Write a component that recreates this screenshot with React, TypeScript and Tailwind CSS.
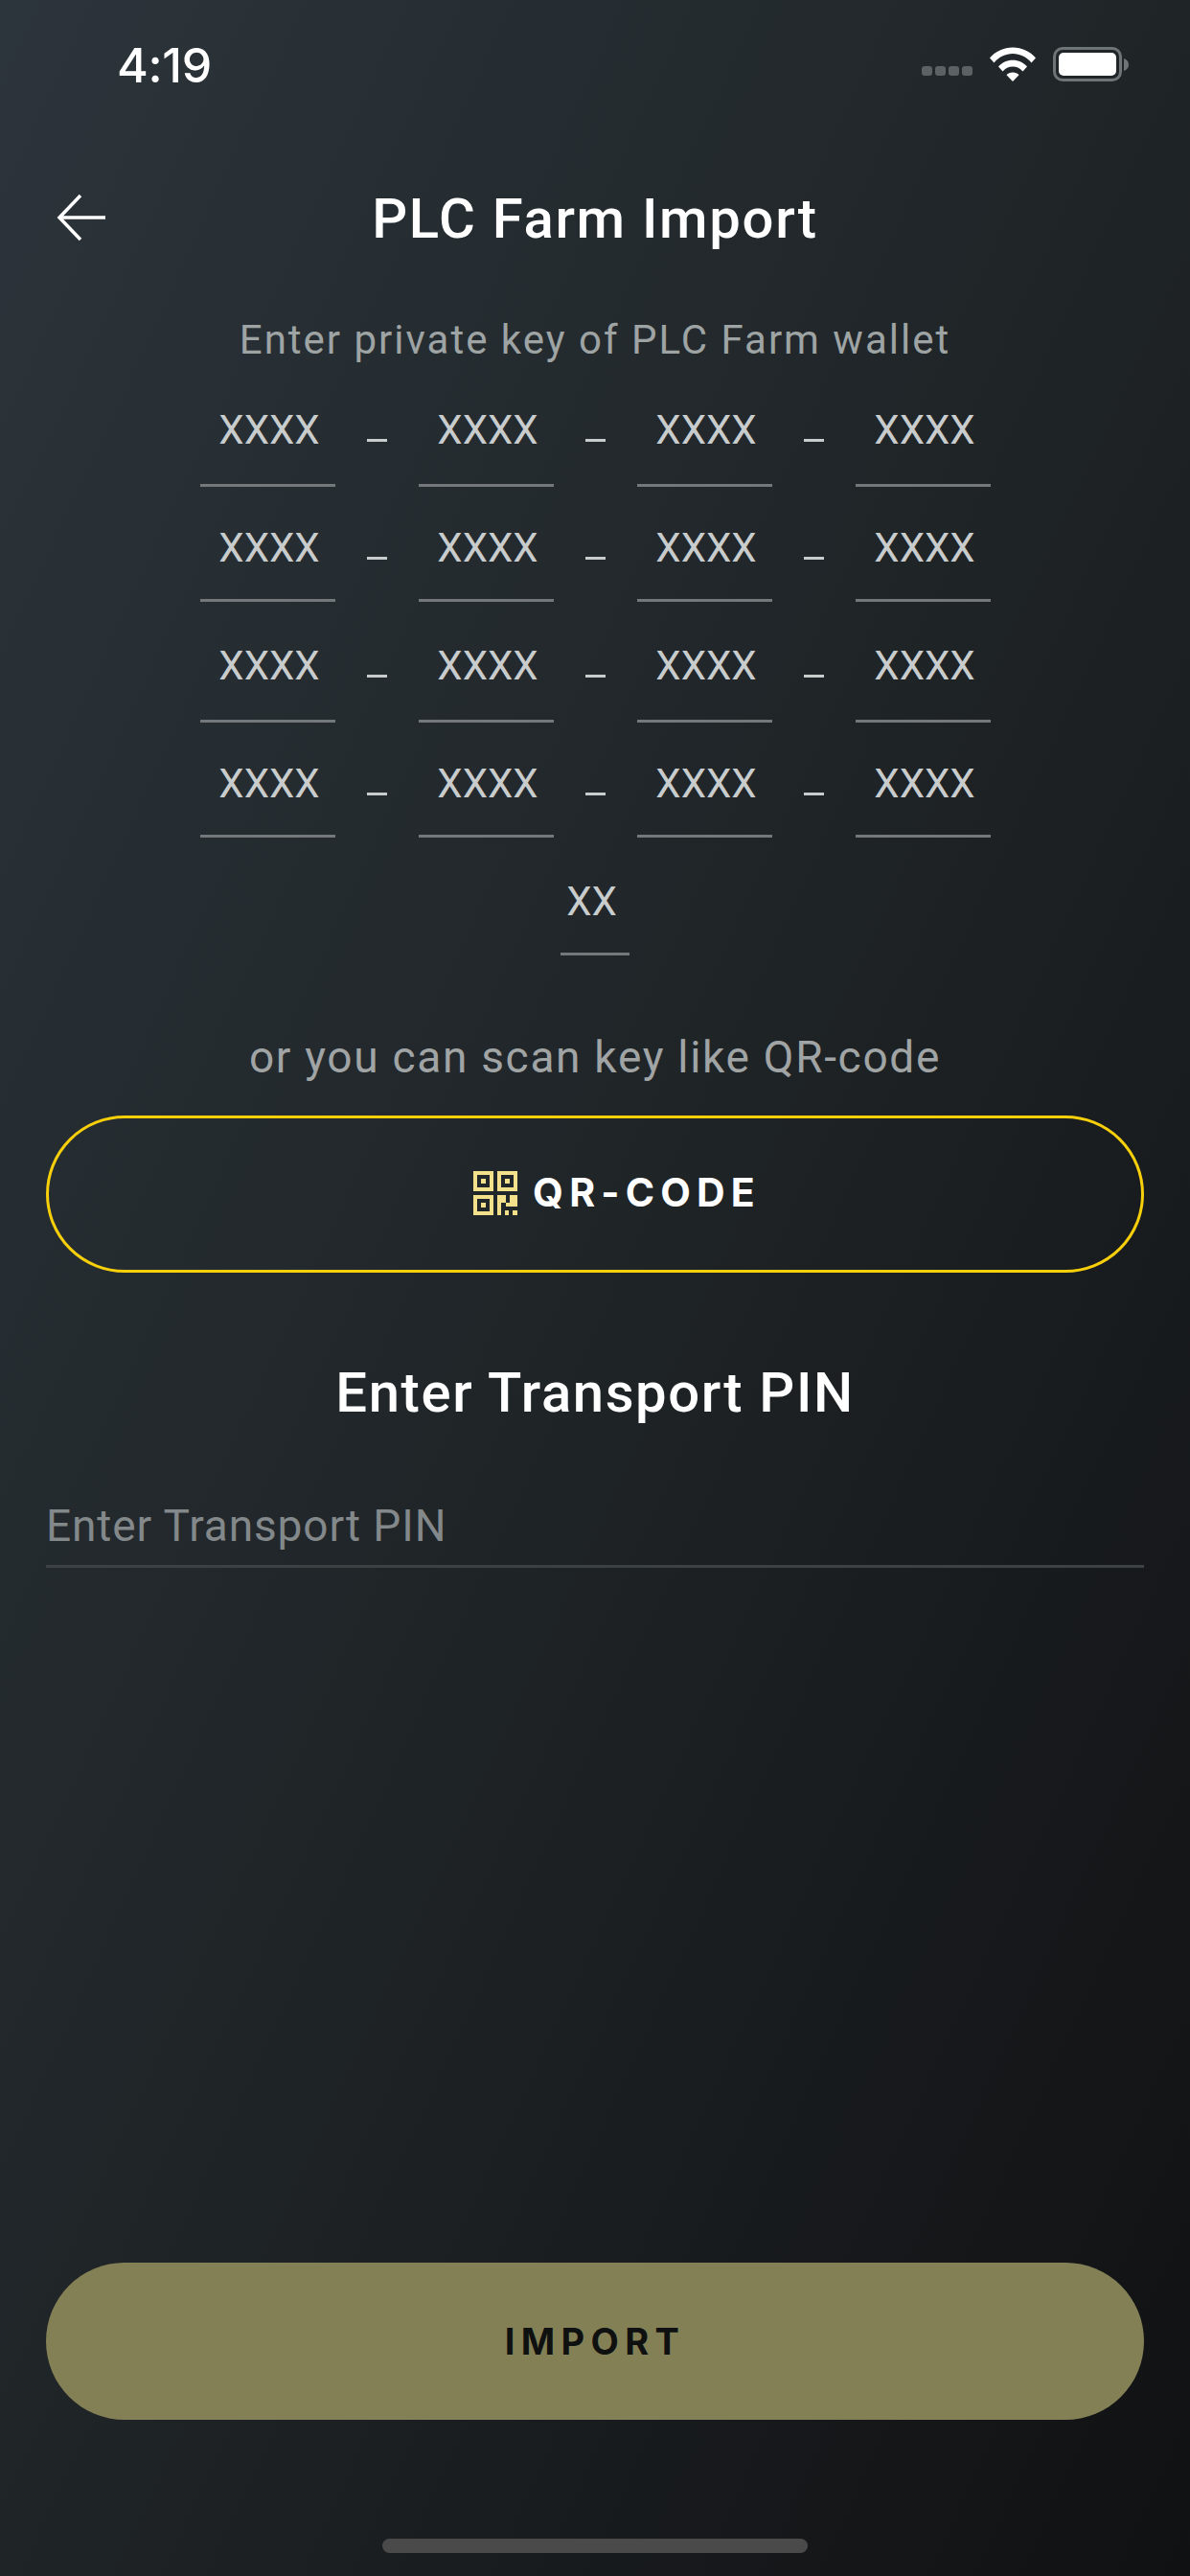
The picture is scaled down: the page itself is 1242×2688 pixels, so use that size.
const FONT = "font-['Roboto',sans-serif]"

const ROWS = [0, 1, 2, 3]
const CELLS = [0, 1, 2, 3]

function KeyCell({ label, width, nudge, short }: { label: string; width: string; nudge: string; short: boolean }) {
  return (
    <div className={`${width} h-[93px] flex flex-col shrink-0`}>
      <div className={`${short ? 'h-[86px] pb-[20px]' : 'h-[89px] pb-[23px]'} flex items-center justify-center text-[42px] leading-none text-[#c9cccc] ${nudge}`}>
        {label}
      </div>
      <div className="h-[3px] bg-[#74787a]" />
    </div>
  )
}

function KeyRow({ short }: { short: boolean }) {
  return (
    <div className="flex justify-center">
      {CELLS.map(i => (
        <div key={i} className="flex">
          <KeyCell label="XXXX" width="w-[141px]" nudge="pl-[4px]" short={short} />
          {i < 3 && (
            <div className="w-[87px] flex justify-center">
              <div className="w-[21px] h-[3px] mt-[42px] ml-[1px] bg-[#c9cccc]" />
            </div>
          )}
        </div>
      ))}
    </div>
  )
}

function WifiIcon() {
  return (
    <svg width="48" height="36" viewBox="0 0 48 36" fill="#fff">
      <path d="M0 11.5 C6 4.5 14.5 0.5 24 0.5 C33.5 0.5 42 4.5 48 11.5 L43.5 16.5 C38.5 10.5 31.5 7 24 7 C16.5 7 9.5 10.5 4.5 16.5 Z" />
      <path d="M9 20.5 C12.7 16.2 18 13.7 24 13.7 C30 13.7 35.3 16.2 39 20.5 L34.5 25.5 C32 22.3 28.2 20.4 24 20.4 C19.8 20.4 16 22.3 13.5 25.5 Z" />
      <path d="M17.5 29.2 C19 27.5 21.3 26.6 24 26.6 C26.7 26.6 29 27.5 30.5 29.2 L24 36 Z" />
    </svg>
  )
}

function BatteryIcon() {
  return (
    <div className="flex items-center">
      <div className="w-[72px] h-[36px] rounded-[10px] border-[3px] border-[#6f7476] p-[3px]">
        <div className="w-full h-full rounded-[5px] bg-white" />
      </div>
      <svg width="5" height="13" viewBox="0 0 5 13" className="ml-[2px]">
        <path d="M0 0 C3 1 5 3.5 5 6.5 C5 9.5 3 12 0 13 Z" fill="#6f7476" />
      </svg>
    </div>
  )
}

function QrIcon() {
  return (
    <svg width="46" height="46" viewBox="0 0 46 46" fill="#f3e08a">
      <path fillRule="evenodd" d="M0 0H21V21H0ZM4 4V17H17V4ZM8 8H13V13H8Z" />
      <path fillRule="evenodd" d="M25 0H46V21H25ZM29 4V17H42V4ZM33 8H38V13H33Z" />
      <path fillRule="evenodd" d="M0 25H21V46H0ZM4 29V42H17V29ZM8 33H13V38H8Z" />
      <path d="M25 25H34V33H38V25H46V37H34V33H29V46H25Z" />
      <rect x="33" y="41" width="4" height="5" />
      <rect x="41" y="41" width="5" height="5" />
    </svg>
  )
}

export default function App() {
  return (
    <div className={`${FONT} w-[1242px] h-[2688px] flex flex-col bg-[linear-gradient(to_bottom_right,#2c353b_0%,#1f2427_50%,#101112_100%)] text-white overflow-hidden`}>
      {/* status bar */}
      <div className="h-[132px] pl-[122px] pr-[64px] flex items-start justify-between shrink-0">
        <div className="mt-[40px] text-[50px] leading-[56px] font-medium font-['Inter',sans-serif] tracking-[-0.3px]">4:19</div>
        <div className="flex items-center mt-[49px]">
          <div className="flex gap-[3px] mt-[14px] mr-[18px]">
            {ROWS.map(i => (
              <div key={i} className="w-[11px] h-[10px] rounded-[3px] bg-[#5c6163]" />
            ))}
          </div>
          <WifiIcon />
          <div className="w-[18px]" />
          <BatteryIcon />
        </div>
      </div>

      {/* header */}
      <div className="relative h-[190px] shrink-0 pt-[62px] flex justify-center">
        <svg width="52" height="50" viewBox="0 0 52 50" fill="none" stroke="#fff" strokeWidth="3.5" className="absolute left-[59px] top-[70px]">
          <path d="M51 25H3M25 2L3 25L25 48" />
        </svg>
        <div className="text-[58px] leading-[68px] font-medium tracking-[1.7px]">PLC Farm Import</div>
      </div>

      {/* private key */}
      <div className="text-center text-[42px] leading-[50px] tracking-[2px] text-[#9ea3a4] mt-[8px] shrink-0">
        Enter private key of PLC Farm wallet
      </div>
      <div className="flex flex-col gap-[30px] mt-[36px] shrink-0">
        {ROWS.map(r => <KeyRow key={r} short={r % 2 === 1} />)}
        <div className="flex justify-center">
          <KeyCell label="XX" width="w-[72px]" nudge="pr-[7px]" short />
        </div>
      </div>

      <div className="text-center text-[46px] leading-[50px] tracking-[1.7px] text-[#a0a4a5] mt-[77px] shrink-0">
        or you can scan key like QR-code
      </div>

      {/* scan button */}
      <div className="mx-[48px] mt-[36px] h-[164px] shrink-0 rounded-[82px] border-[3px] border-[#f7cf0b] flex items-center justify-center gap-[16px] pl-[46px] pb-[3px]">
        <QrIcon />
        <div className="font-['Inter',sans-serif] text-[41px] leading-none font-bold tracking-[6.2px]">QR-CODE</div>
      </div>

      {/* transport pin */}
      <div className="text-center text-[58px] leading-[68px] font-medium tracking-[1.6px] mt-[91px] shrink-0">
        Enter Transport PIN
      </div>
      <div className="mx-[48px] mt-[77px] h-[72px] shrink-0 border-b-[3px] border-[#3c4143] text-[46px] leading-[56px] tracking-[0.9px] text-[#83888a]">
        Enter Transport PIN
      </div>

      {/* import */}
      <div className="mt-auto mx-[48px] h-[164px] shrink-0 rounded-[82px] bg-[#848056] flex items-center justify-center font-['Inter',sans-serif] text-[38px] font-bold tracking-[6.4px] text-[#0f1110]">
        IMPORT
      </div>
      <div className="h-[163px] shrink-0 flex justify-center items-start pt-[124px]">
        <div className="w-[444px] h-[15px] rounded-[8px] bg-[#4a4a4a]" />
      </div>
    </div>
  )
}
